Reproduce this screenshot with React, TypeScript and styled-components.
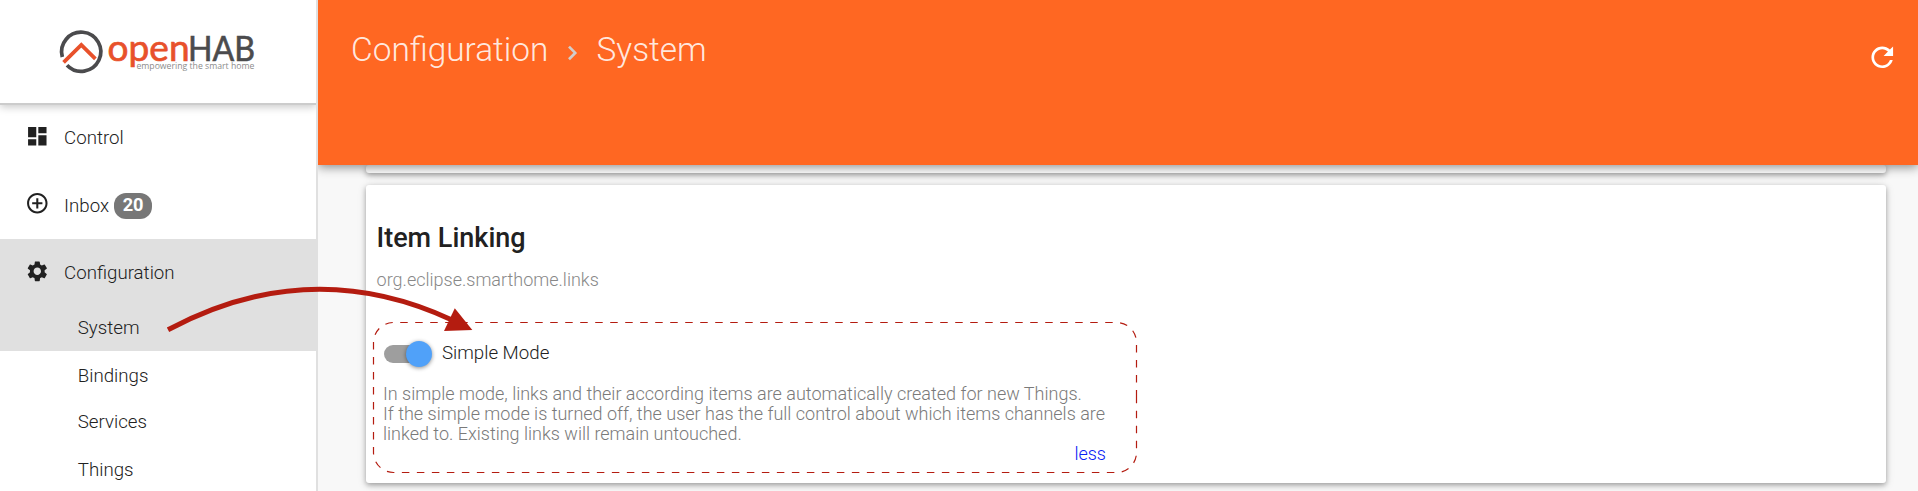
import React from 'react';
import styled, { createGlobalStyle } from 'styled-components';
import { MdAddCircleOutline, MdDashboard, MdRefresh, MdSettings } from 'react-icons/md';

const GlobalStyle = createGlobalStyle`
  * { box-sizing: border-box; }
  body {
    margin: 0;
    background: #f8f8f8;
    font-family: Roboto, "Liberation Sans", sans-serif;
    font-weight: 300;
    color: #212121;
  }
`;

const Page = styled.div`
  position: relative;
  display: flex;
  width: 1918px;
  height: 491px;
  overflow: hidden;
`;

const Sidebar = styled.aside`
  position: relative;
  z-index: 2;
  width: 318px;
  flex: none;
  display: flex;
  flex-direction: column;
  background: #fff;
  border-right: 2px solid #e0e0e0;
`;

const Brand = styled.div`
  height: 105px;
  flex: none;
  border-bottom: 2px solid #ccc;
  box-shadow: 0 2px 8px rgba(0, 0, 0, 0.22);
  clip-path: inset(0 0 -16px 0);
`;

const NavGroup = styled.div<{ $active?: boolean }>`
  flex: none;
  background: ${(p) => (p.$active ? '#e0e0e0' : 'transparent')};
`;

const NavItem = styled.a<{ $height: number; $textShift?: number }>`
  display: flex;
  align-items: center;
  height: ${(p) => p.$height}px;
  padding: 0 0 2px 24.5px;
  font-size: 18.7px;
  line-height: 24px;

  svg {
    width: 24.6px;
    height: 24.6px;
    margin-right: 15px;
    flex: none;
  }

  span {
    padding-top: ${(p) => p.$textShift ?? 3}px;
  }
`;

const SubItem = styled.a<{ $height: number }>`
  display: flex;
  align-items: center;
  height: ${(p) => p.$height}px;
  padding-left: 77.8px;
  font-size: 18.7px;
`;

const Badge = styled.b`
  display: flex;
  justify-content: center;
  width: 38px;
  height: 26px;
  margin: 5px 0 0 5px;
  border-radius: 12px;
  background: #777;
  color: #fff;
  font-size: 18.2px;
  font-weight: 700;
  line-height: 23px;
`;

const Main = styled.main`
  flex: 1;
  display: flex;
  flex-direction: column;
`;

const Header = styled.header`
  position: relative;
  z-index: 1;
  display: flex;
  justify-content: space-between;
  align-items: flex-start;
  height: 165px;
  flex: none;
  padding: 30px 20px 0 33px;
  background: #ff6722;
  color: rgba(255, 255, 255, 0.87);
  box-shadow: 0 2px 10px rgba(0, 0, 0, 0.46);
`;

const Breadcrumb = styled.h1`
  display: flex;
  align-items: center;
  margin: 0;
  font-size: 33.4px;
  font-weight: 300;
  line-height: 40px;

  svg {
    margin: 6px 18.6px 0 17.5px;
  }
`;

const Refresh = styled(MdRefresh)`
  width: 32.5px;
  height: 32.5px;
  margin-top: 11px;
  color: #fff;
`;

const Content = styled.section`
  display: flex;
  flex-direction: column;
  gap: 12px;
  padding: 0 32px 0 48px;
`;

const Card = styled.article`
  flex: none;
  background: #fff;
  border-radius: 3px;
  box-shadow: 0 2px 5px rgba(0, 0, 0, 0.28), 0 2px 10px rgba(0, 0, 0, 0.14);
`;

const PreviousCard = styled(Card)`
  height: 8px;
`;

const LinkingCard = styled(Card)`
  height: 298px;
  padding: 35px 10px 0;
`;

const CardTitle = styled.h2`
  margin: 0 0 0 0.5px;
  font-size: 27px;
  font-weight: 500;
  line-height: 36px;
`;

const CardId = styled.div`
  margin: 13px 0 0 0.6px;
  font-size: 18px;
  line-height: 22px;
  color: #888;
`;

const Option = styled.div`
  width: 730px;
  padding: 50px 0 0 7px;
`;

const ToggleRow = styled.label`
  display: flex;
  align-items: center;
  height: 26px;
  gap: 10px;
  font-size: 18.7px;
  line-height: 22px;

  span { padding-bottom: 3px; }
`;

const Track = styled.div`
  display: flex;
  align-items: center;
  justify-content: flex-end;
  width: 48px;
  height: 18px;
  margin-left: 1px;
  border-radius: 9px;
  background: linear-gradient(#9e9e9e, #9e9e9e) left / 36px 100% no-repeat;
`;

const Knob = styled.div`
  width: 26px;
  height: 26px;
  flex: none;
  border-radius: 50%;
  background: #50a1f9;
  box-shadow: 0 1px 4px rgba(0, 0, 0, 0.45);
`;

const Description = styled.p`
  margin: 17px 0 0;
  font-size: 18px;
  line-height: 20px;
  white-space: pre-line;
  color: #7a7a7a;
`;

const Less = styled.a`
  display: block;
  text-align: right;
  font-size: 18px;
  line-height: 20px;
  color: #0a22f5;
`;

const Annotation = styled.svg`
  position: absolute;
  inset: 0;
  z-index: 3;
  pointer-events: none;
`;

function Logo() {
  return (
    <svg width="316" height="103" viewBox="0 0 316 103" fontFamily="Lato, sans-serif" fontWeight="400">
      <path d="M62.3 57A19.6 19.6 0 1 1 67 65.3" fill="none" stroke="#4b4b4d" strokeWidth="3.7" />
      <path d="M63.6 62.4 81.3 45 95.4 58.8" fill="none" stroke="#e8512b" strokeWidth="3.8" />
      <text x="107.6" y="60.5" fontSize="37.5" textLength="82" lengthAdjust="spacingAndGlyphs" fill="#e8512b" stroke="#e8512b" strokeWidth="0.7">open</text>
      <text x="188" y="60.7" fontSize="34" textLength="67" lengthAdjust="spacingAndGlyphs" fill="#4b4b4d" stroke="#4b4b4d" strokeWidth="0.6">HAB</text>
      <text x="136.4" y="69" fontFamily="Open Sans, sans-serif" fontSize="8.7" textLength="118" fill="#8c8c8c">empowering the smart home</text>
    </svg>
  );
}

function Chevron() {
  return (
    <svg width="12" height="18" viewBox="0 0 12 18" fill="none" stroke="#d2cdca" strokeWidth="2.7">
      <path d="M3 2.6 9.2 8.9 3 15.2" />
    </svg>
  );
}

export default function App() {
  return (
    <Page>
      <GlobalStyle />
      <Sidebar>
        <Brand><Logo /></Brand>
        <NavGroup>
          <NavItem $height={65}><MdDashboard /><span>Control</span></NavItem>
          <NavItem $height={69} $textShift={5}>
            <MdAddCircleOutline /><span>Inbox</span><Badge>20</Badge>
          </NavItem>
        </NavGroup>
        <NavGroup $active>
          <NavItem $height={66}><MdSettings /><span>Configuration</span></NavItem>
          <SubItem $height={46}>System</SubItem>
        </NavGroup>
        <NavGroup>
          <SubItem $height={50}>Bindings</SubItem>
          <SubItem $height={42}>Services</SubItem>
          <SubItem $height={54}>Things</SubItem>
        </NavGroup>
      </Sidebar>
      <Main>
        <Header>
          <Breadcrumb>Configuration<Chevron />System</Breadcrumb>
          <Refresh />
        </Header>
        <Content>
          <PreviousCard />
          <LinkingCard>
            <CardTitle>Item Linking</CardTitle>
            <CardId>org.eclipse.smarthome.links</CardId>
            <Option>
              <ToggleRow>
                <Track><Knob /></Track>
                <span>Simple Mode</span>
              </ToggleRow>
              <Description>
                {'In simple mode, links and their according items are automatically created for new Things.\nIf the simple mode is turned off, the user has the full control about which items channels are\nlinked to. Existing links will remain untouched.'}
              </Description>
              <Less>less</Less>
            </Option>
          </LinkingCard>
        </Content>
      </Main>
      <Annotation width="1918" height="491" viewBox="0 0 1918 491" fill="none">
        <path
          d="M1136.5 397.5V342.5A20 20 0 0 0 1116.5 322.5H393.5A20 20 0 0 0 373.5 342.5V452.5A20 20 0 0 0 393.5 472.5H1116.5A20 20 0 0 0 1136.5 452.5Z"
          stroke="#b41c10" strokeWidth="1.2" strokeDasharray="7.5 7.5"
        />
        <path d="M168 329.8Q310 254 452 320" stroke="#b41c10" strokeWidth="5" />
        <path d="M454.8 308.3 472.3 330 444 331Z" fill="#b41c10" />
      </Annotation>
    </Page>
  );
}
